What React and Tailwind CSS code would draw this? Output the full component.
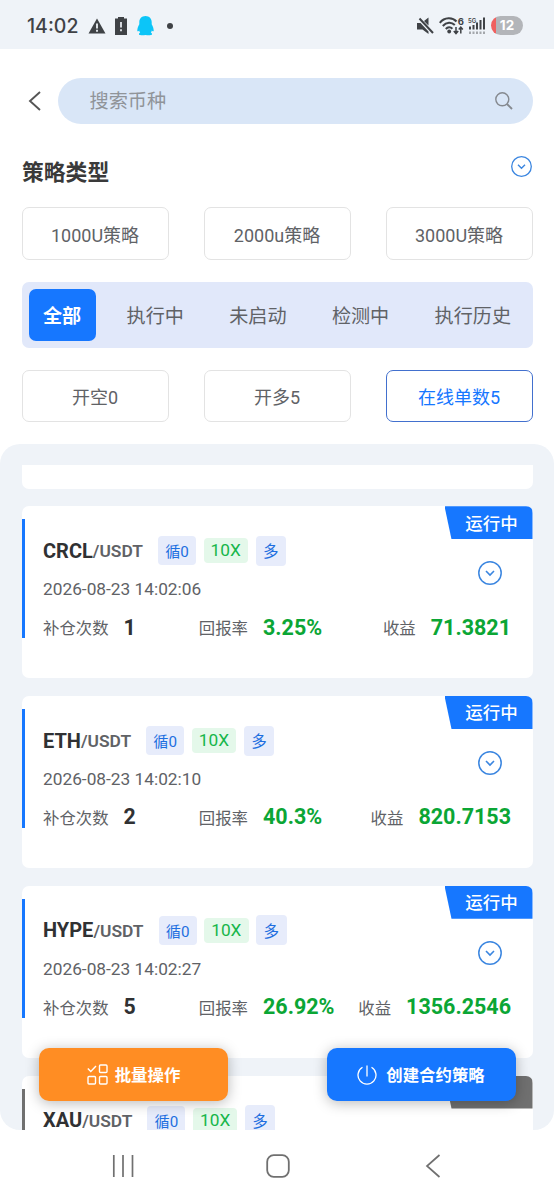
import React from 'react';

const fontStack = "font-['Roboto','Noto_Sans_CJK_SC',sans-serif]";

const amounts = ['1000U策略', '2000u策略', '3000U策略'];
const tabs = ['全部', '执行中', '未启动', '检测中', '执行历史'];
const filters = ['开空0', '开多5', '在线单数5'];

const strategies = [
  { coin: 'CRCL', time: '2026-08-23 14:02:06', count: 1, rate: '3.25%', profit: '71.3821', status: '运行中' },
  { coin: 'ETH', time: '2026-08-23 14:02:10', count: 2, rate: '40.3%', profit: '820.7153', status: '运行中' },
  { coin: 'HYPE', time: '2026-08-23 14:02:27', count: 5, rate: '26.92%', profit: '1356.2546', status: '运行中' },
  { coin: 'XAU' },
];

const CircleDown = ({ className }) => (
  <svg viewBox="0 0 24 24" fill="none" stroke="#3b86e0" className={className}>
    <circle cx="12" cy="12" r="11.2" strokeWidth="1.5" />
    <path d="M8 10l4 4 4-4" strokeWidth="1.6" />
  </svg>
);

const StatusBar = () => (
  <header className="flex h-[49px] shrink-0 items-center justify-between bg-[#eff3f8] pr-[31px] pl-[27px] text-[#3f4246]">
    <div className="flex items-center pt-[3px]">
      <span className="w-[53px] font-['Inter'] text-[19.5px] leading-6 font-medium">14:02</span>
      <svg width="18" height="16" viewBox="0 0 18 16" className="ml-[7.5px]">
        <path d="M9 .5L17.5 15.5H.5z" fill="currentColor" />
        <path d="M9 5.5v5M9 11.8v2" stroke="#eff3f8" strokeWidth="1.8" />
      </svg>
      <svg width="12" height="18" viewBox="0 0 12 18" className="ml-[9.5px]">
        <path d="M3 0h6v1.5h3V18H0V1.5h3z" fill="currentColor" />
        <path d="M6 5v5.5M6 12.2v2" stroke="#eff3f8" strokeWidth="1.7" />
      </svg>
      <svg width="17" height="20" viewBox="0 0 17 20" className="ml-[9.5px]">
        <path
          d="M8.5 0C4.6 0 2.3 2.8 2.3 6v2.2C1.2 10 .3 12.5.3 14.5c0 1.2.7 1.100 1.900-.1.200.8.500 1.500 1 2.200-1.200.5-1.400 1.300-1 2.200.4.600 4.500.6 6.300.1 1.800.5 5.900.5 6.300-.1.400-.9.200-1.700-1-2.200.5-.7.800-1.400 1-2.200 1.200 1.200 1.900 1.300 1.900.1 0-2-.9-4.500-2-6.300V6c0-3.200-2.300-6-6.200-6z"
          fill="#0cc5f8"
        />
      </svg>
      <span className="ml-[13px] size-[6px] rounded-full bg-[#3f4246]" />
    </div>

    <div className="flex items-center pt-[2px]">
      <svg width="17" height="18" viewBox="0 0 17 18">
        <path d="M0 6h3.5l8 8.5V17l-6-4.5H0zM7 4L11.5.5v8z" fill="currentColor" />
        <path d="M2.5 1.5L16 16" stroke="currentColor" strokeWidth="2" />
      </svg>
      <svg width="26" height="18" viewBox="0 0 26 18" fill="none" stroke="currentColor" className="ml-[5px]">
        <path d="M.8 5.8C5.5 0 13.5 0 17.5 4.5M3.8 9C7.5 4.7 12.5 4.7 15.8 8M6.8 12c2-2.3 4.6-2.3 6.6-.3" strokeWidth="2" />
        <circle cx="10.2" cy="14.5" r="1.9" fill="currentColor" stroke="none" />
        <path d="M17 10v6.5M14.8 14l2.2 2.5 2.2-2.5M21.8 16.5V10M19.8 12.5l2-2.4 2 2.4" strokeWidth="1.5" />
        <text x="18.8" y="7.6" fontSize="9.5" fontWeight="700" fontFamily="Inter" fill="currentColor" stroke="none">6</text>
      </svg>
      <svg width="18" height="18" viewBox="0 0 18 18" fill="currentColor" className="ml-[3px]">
        <text x="0" y="5.6" fontSize="6" fontWeight="600" fontFamily="Inter">5G</text>
        <rect x="1" y="9.5" width="2" height="3" />
        <rect x="4.5" y="8" width="2" height="4.5" />
        <rect x="8" y="5.5" width="2" height="7" />
        <rect x="11.5" y="3" width="2" height="9.5" />
        <rect x="15" y="0.5" width="2" height="12" />
        <path d="M1 15.8h16" stroke="#a4a7ab" strokeWidth="2.5" strokeDasharray="2 1.5" />
      </svg>
      <div className="ml-[5px] flex h-[19px] w-[32px] items-center justify-center rounded-full bg-linear-to-r from-[#f0605f] from-[5px] to-[#b3b5b9] to-[5px] font-['Inter'] text-[13.5px] leading-none font-bold text-white">
        12
      </div>
    </div>
  </header>
);

const SearchRow = () => (
  <div className="mt-[29px] flex h-[46px] items-center pr-[21px] pl-[28px]">
    <svg width="14" height="20" viewBox="0 0 14 20" fill="none" stroke="#555" strokeWidth="1.9">
      <path d="M12 1L2 10l10 9" />
    </svg>
    <div className="ml-4 flex h-full flex-1 items-center justify-between rounded-full bg-[#d9e6f7] pr-[20px] pl-[31.5px]">
      <span className="pt-[3px] text-[19.2px] text-[#909499]">搜索币种</span>
      <svg width="18" height="18" viewBox="0 0 18 18" fill="none" stroke="#85898f" strokeWidth="1.4">
        <circle cx="7.3" cy="7.3" r="6.5" />
        <path d="M12 12l5 5" strokeWidth="1.9" />
      </svg>
    </div>
  </div>
);

const OptionButton = ({ active, children }) => (
  <button
    className={`h-[52.5px] rounded-[7px] border pt-[4px] text-[18px] ${
      active ? 'border-[#4270ce] text-[#1677ff]' : 'border-[#e3e3e3] text-[#606266]'
    }`}
  >
    {children}
  </button>
);

const StrategyCard = ({ item }) => (
  <div className="relative h-[172px] shrink-0 rounded-[7px] bg-white pt-[26.5px] pr-[22px] pl-[21.5px]">
    <div className={`absolute top-[13px] left-0 h-[119px] w-[3px] ${item.status ? 'bg-[#1677ff]' : 'bg-[#707070]'}`} />
    <div
      className={`absolute top-0 right-0 flex h-[33px] w-[88px] items-center justify-center rounded-tr-[7px] pt-[2px] pl-[6px] text-[17.5px] font-medium text-white [clip-path:polygon(0_0,100%_0,100%_100%,7px_100%)] ${
        item.status ? 'bg-[#1677ff]' : 'bg-[#707070]'
      }`}
    >
      {item.status}
    </div>
    <CircleDown className="absolute top-[55px] right-[31px] size-6" />

    <div className="flex h-9 items-center">
      <span className="text-[20px] leading-[18px] font-bold text-[#303133]">{item.coin}</span>
      <span className="pt-px text-[17.4px] leading-[18px] font-semibold text-[#606266]">/USDT</span>
      <span className="ml-[15px] flex h-[28.5px] w-[38px] items-center justify-center rounded-[4px] bg-[#e7ecfb] pt-[3px] text-[15.2px] leading-[18px] text-[#1e6fe0]">
        循0
      </span>
      <span className="ml-[7.5px] flex h-[25px] w-[44.5px] items-center justify-center rounded-[4px] bg-[#e4f8ea] pb-px text-[17.3px] leading-[18px] text-[#17b64a]">
        10X
      </span>
      <span className="ml-[7.5px] flex h-[30px] w-[30.5px] items-center justify-center rounded-[4px] bg-[#e7ecfb] pt-[3px] text-[15.5px] leading-[18px] text-[#1e6fe0]">
        多
      </span>
    </div>

    {item.time && (
      <>
        <p className="mt-[8.5px] text-[17.3px] leading-[24px] text-[#606266]">{item.time}</p>
        <div className="mt-[12px] grid h-[28px] grid-cols-3 items-center text-[16.4px] text-[#606266]">
          <div className="flex items-center whitespace-nowrap">
            <span className="pt-[4px]">补仓次数</span>
            <span className="ml-[15px] text-[21.3px] leading-[24px] font-bold text-[#303133]">{item.count}</span>
          </div>
          <div className="flex items-center whitespace-nowrap">
            <span className="pt-[4px]">回报率</span>
            <span className="ml-[15px] text-[21.5px] leading-[24px] font-bold text-[#0ba635]">{item.rate}</span>
          </div>
          <div className="-mr-[0.5px] flex items-center justify-end whitespace-nowrap">
            <span className="pt-[4px]">收益</span>
            <span className="ml-[15px] text-[21.5px] leading-[24px] font-bold text-[#0ba635]">{item.profit}</span>
          </div>
        </div>
      </>
    )}
  </div>
);

const BottomActions = () => (
  <div className="absolute top-[604px] right-[38.5px] left-[39px] flex h-[53px] justify-between text-[16.4px] font-bold text-white">
    <button className="flex w-[189px] items-center justify-center rounded-[10px] bg-[#ff8d23] shadow-[0_2px_14px_rgba(0,0,0,0.28)]">
      <svg width="21" height="21" viewBox="0 0 21 21" fill="none" stroke="#fff" strokeWidth="1.4">
        <path d="M.8 4.5l3 3L9 2" />
        <rect x="12.5" y="1" width="7.5" height="7.5" rx="1" />
        <rect x="1" y="12.5" width="7.5" height="7.5" rx="1" />
        <rect x="12.5" y="12.5" width="7.5" height="7.5" rx="1" />
      </svg>
      <span className="ml-[7px] pt-[4px]">批量操作</span>
    </button>
    <button className="flex w-[189px] items-center justify-center rounded-[10px] bg-[#1677ff] shadow-[0_2px_14px_rgba(0,0,0,0.28)]">
      <svg width="20" height="20" viewBox="0 0 20 20" fill="none" stroke="#fff" strokeWidth="1.3">
        <path d="M5.5 2.3a9 9 0 1 0 9 0M10 .5v11" />
      </svg>
      <span className="ml-[9px] pt-[4px]">创建合约策略</span>
    </button>
  </div>
);

const NavBar = () => (
  <nav className="flex h-[69px] shrink-0 items-center pt-[2px] pl-[112px]">
    <svg width="22" height="22" viewBox="0 0 22 22" stroke="#707070" strokeWidth="1.7">
      <path d="M1.8 0v22M11 0v22M20.5 0v22" />
    </svg>
    <svg width="24" height="24" viewBox="0 0 24 24" fill="none" stroke="#707070" strokeWidth="1.8" className="ml-[132px]">
      <rect x="1.2" y="1.2" width="21.6" height="21.6" rx="6.5" />
    </svg>
    <svg width="16" height="24" viewBox="0 0 16 24" fill="none" stroke="#707070" strokeWidth="1.7" className="ml-[135px]">
      <path d="M14.5 1L2 12l12.5 11" />
    </svg>
  </nav>
);

export default function App() {
  return (
    <div className={`flex h-[1199px] w-[554px] flex-col overflow-hidden bg-white ${fontStack}`}>
      <StatusBar />
      <SearchRow />

      <div className="mt-[31px] flex h-[32px] items-center justify-between px-[22px]">
        <h2 className="pt-[4px] text-[21.8px] font-bold text-[#3a3a3a]">策略类型</h2>
        <CircleDown className="mb-[9px] size-[21px]" />
      </div>

      <div className="mt-[20px] grid grid-cols-3 gap-[35px] px-[21.5px]">
        {amounts.map((name) => (
          <OptionButton key={name}>{name}</OptionButton>
        ))}
      </div>

      <div className="mx-[21.5px] mt-[22px] flex h-[66px] shrink-0 items-center justify-between rounded-[7px] bg-[#e1e8fa] px-[7px]">
        {tabs.map((tab, i) => (
          <button
            key={tab}
            className={`h-[52px] rounded-[7px] px-[14.5px] pt-[6px] text-[19.1px] ${
              i === 0 ? 'bg-[#1677ff] font-bold text-white' : 'text-[#606266]'
            }`}
          >
            {tab}
          </button>
        ))}
      </div>

      <div className="mt-[22px] grid grid-cols-3 gap-[35px] px-[21.5px]">
        {filters.map((name, i) => (
          <OptionButton key={name} active={i === 2}>
            {name}
          </OptionButton>
        ))}
      </div>

      <main className="relative mt-[22px] h-[686px] shrink-0 rounded-[20px] bg-[#eff3f8] px-[21.5px] pt-[21px]">
        <div className="flex h-[665px] flex-col gap-[17.8px] overflow-hidden">
          <div className="-mb-[0.6px] h-[24px] shrink-0 rounded-b-[7px] bg-white" />
          {strategies.map((item) => (
            <StrategyCard key={item.coin} item={item} />
          ))}
        </div>
        <BottomActions />
      </main>

      <NavBar />
    </div>
  );
}
